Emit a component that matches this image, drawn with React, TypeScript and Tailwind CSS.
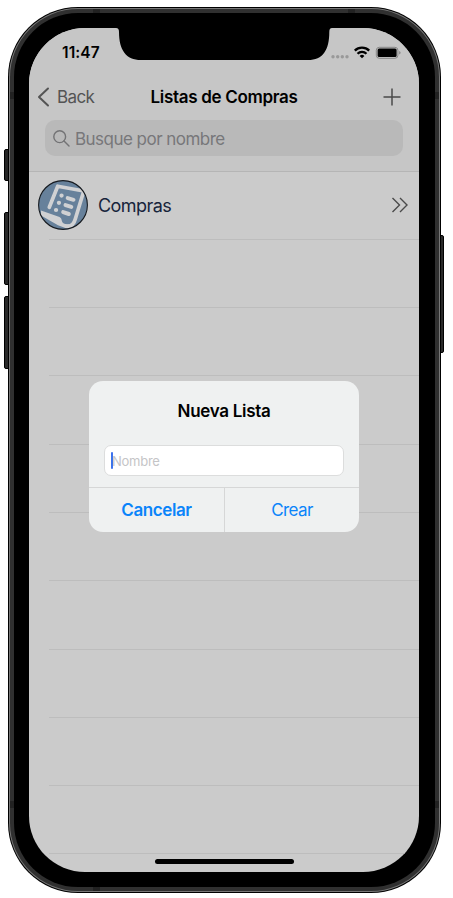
const rows = [0, 1, 2, 3, 4, 5, 6, 7, 8];

function StatusIcons() {
  return (
    <svg className="absolute left-[302px] top-[17px]" width="72" height="16" viewBox="331 45 72 16">
      {[333, 337.7, 342.3, 347].map((x) => (
        <circle key={x} cx={x} cy="56.7" r="1.7" fill="#999" />
      ))}
      <g fill="none" stroke="#000" strokeWidth="2.3">
        <path d="M354.8 50.600a10.2 10.2 0 0 1 14.4 0" />
        <path d="M357.5 53.700a6.4 6.4 0 0 1 9 0" />
      </g>
      <path d="M362 58.300l-2.4-2.4a3.4 3.4 0 0 1 4.800 0z" fill="#000" />
      <rect x="376.3" y="47.3" width="21.6" height="11" rx="3" fill="none" stroke="#858585" />
      <rect x="377.6" y="48.600" width="19" height="8.400" rx="1.500" />
      <path d="M399.2 51v3.6q1.4-.5 1.4-1.8t-1.4-1.8z" fill="#858585" />
    </svg>
  );
}

function ListIcon() {
  return (
    <svg className="ml-[9px]" width="50" height="50" viewBox="0 0 50 50">
      <defs>
        <clipPath id="disc">
          <circle cx="25" cy="25" r="24.3" />
        </clipPath>
      </defs>
      <circle cx="25" cy="25" r="24.5" fill="#67819b" />
      <g clipPath="url(#disc)">
        <path d="M11.300 27.300L19.700 6.200L45.800 11L37.300 39Q35 47.300 28.500 46.200" fill="none" stroke="#d0d1d3" strokeWidth="3.7" strokeLinejoin="round" strokeLinecap="round" />
        <path d="M3 30.500L21.500 37Q23.500 38 23.500 39.500Q24 44 28.500 44.200L31 44.200L33 48.500L28 48.200L20 45.200L3 35.500z" fill="#d0d1d3" />
        <g stroke="#d0d1d3" strokeLinecap="round">
          <path d="M29.700 18.100l5.800 1.700M27.500 25.100l5.800 1.800M25.200 32.100l5.600 1.900" strokeWidth="4" />
          <path d="M23.500 15.600h.1M20.900 22.800h.1M18 30h.1" strokeWidth="4.200" />
        </g>
      </g>
      <circle cx="25" cy="25" r="24.4" fill="none" stroke="#171b20" strokeWidth="1.1" />
    </svg>
  );
}

function Header() {
  return (
    <header className="h-[143.5px] shrink-0 border-b border-[#b5b5b5] bg-[#c6c6c6]">
      <div className="relative h-[50px]">
        <span className="absolute left-[33px] top-[15px] text-[15.5px] font-semibold leading-5 tracking-[0.1px] text-black">11:47</span>
        <svg className="absolute left-[87px] top-0" width="216" height="33" viewBox="116 28 216 33">
          <path d="M115 28C118 28 119 29 119 32C119 50 126 60 141 60H308C323 60 329.300 50 329.300 32C329.300 29 330.300 28 333 28z" />
        </svg>
        <StatusIcons />
      </div>
      <div className="relative flex h-[38px] items-center justify-center">
        <svg className="absolute left-[8px] top-[9px]" width="13" height="20" viewBox="0 0 13 20" fill="none" stroke="#545454" strokeWidth="2" strokeLinecap="round" strokeLinejoin="round">
          <path d="M11 1.5L2 10l9 8.500" />
        </svg>
        <span className="absolute left-[28px] top-[7px] text-[17px] leading-6 tracking-[-0.6px] text-[#545454]">Back</span>
        <h1 className="text-[17px] font-semibold leading-6 tracking-[-0.32px] text-black">Listas de Compras</h1>
        <svg className="absolute left-[354px] top-[10px]" width="18" height="18" viewBox="0 0 18 18" stroke="#4a4a4a" strokeWidth="1.5">
          <path d="M9 .5v17M.5 9h17" />
        </svg>
      </div>
      <div className="mx-4 mt-[4px] flex h-9 items-center rounded-[10px] bg-[#b9b9b9] pl-[8px]">
        <svg width="17" height="17" viewBox="0 0 17 17" fill="none" stroke="#737375" strokeWidth="1.4" strokeLinecap="round">
          <circle cx="6.700" cy="6.700" r="5.900" />
          <path d="M11 11l5 5" />
        </svg>
        <span className="ml-[5px] mt-px text-[17px] leading-6 tracking-[-0.53px] text-[#77777a]">Busque por nombre</span>
      </div>
    </header>
  );
}

function Alert() {
  return (
    <div className="absolute left-[60px] top-[353px] flex h-[151px] w-[270px] flex-col rounded-[14px] bg-[#eff1f1]">
      <h2 className="mt-[18px] text-center text-[17px] font-semibold leading-6 tracking-[-0.3px] text-black">Nueva Lista</h2>
      <div className="mx-[15px] mt-[22px] flex h-[31px] items-center rounded-[7px] border border-[#dcdddd] bg-white pl-[6px]">
        <span className="h-[17px] w-[2px] rounded-full bg-[#3c72ee]" />
        <span className="-ml-px text-[13px] leading-4 tracking-[-0.25px] text-[#c5c5c7]">Nombre</span>
      </div>
      <div className="mt-[11px] flex flex-1 border-t border-[#d6d7d7] text-[17px] text-[#0a84fa]">
        <button className="w-[136px] border-r border-[#d6d7d7] pt-[2px] font-semibold tracking-[-0.4px]">Cancelar</button>
        <button className="flex-1 pt-[2px] tracking-[-0.6px]">Crear</button>
      </div>
    </div>
  );
}

export default function App() {
  return (
    <div className="relative h-[898px] w-[453px] overflow-hidden bg-white pl-[8px] pt-[7px] font-['Inter','Liberation_Sans',sans-serif]">
      <i className="absolute left-[4px] top-[149px] h-[32px] w-[6px] rounded-l-[2px] border border-black bg-[#252525]" />
      <i className="absolute left-[4px] top-[212px] h-[73px] w-[6px] rounded-l-[2px] border border-black bg-[#292929]" />
      <i className="absolute left-[4px] top-[296px] h-[73px] w-[6px] rounded-l-[2px] border border-black bg-[#292929]" />
      <i className="absolute left-[438px] top-[235px] h-[118px] w-[6px] rounded-r-[2px] border border-black bg-[#292929]" />
      <div className="relative h-[886px] w-[433px] rounded-[70px] bg-black p-px">
        <div className="h-full rounded-[69px] bg-[#777] p-px">
          <div className="relative h-full overflow-hidden rounded-[68px] bg-[#303030] p-[4px]">
            <i className="absolute left-[83px] top-0 h-full w-[7px] bg-[#222]" />
            <i className="absolute left-[338px] top-0 h-[5px] w-[7px] bg-[#222]" />
            <i className="absolute left-0 top-[83px] h-[7px] w-full bg-[#222]" />
            <i className="absolute left-0 top-[792px] h-[7px] w-full bg-[#222]" />
            <div className="relative h-full rounded-[64px] bg-black pl-[15px] pt-[15px]">
              <main className="relative flex h-[844px] w-[390px] flex-col overflow-hidden rounded-[56px] bg-[#cbcbcb]">
                <Header />
                <div className="ml-[20px] h-[68.3px] shrink-0 border-b border-[#bdbdbd]">
                  <div className="-ml-[20px] flex h-[67px] items-center">
                    <ListIcon />
                    <span className="ml-[10px] mt-[2px] text-[18px] leading-6 tracking-[-0.55px] text-[#17243b]">Compras</span>
                    <svg className="ml-auto mr-[10px]" width="18" height="16" viewBox="0 0 18 16" fill="none" stroke="#4a4a4a" strokeWidth="1.4">
                      <path d="M1.500 1l7 7-7 7M9 1l7 7-7 7" />
                    </svg>
                  </div>
                </div>
                {rows.map((row) => (
                  <div key={row} className="ml-[20px] h-[68.3px] shrink-0 border-b border-[#bdbdbd]" />
                ))}
                <Alert />
                <div className="absolute left-[126px] top-[831px] h-[5px] w-[139px] rounded-full bg-black" />
              </main>
            </div>
          </div>
        </div>
      </div>
    </div>
  );
}
